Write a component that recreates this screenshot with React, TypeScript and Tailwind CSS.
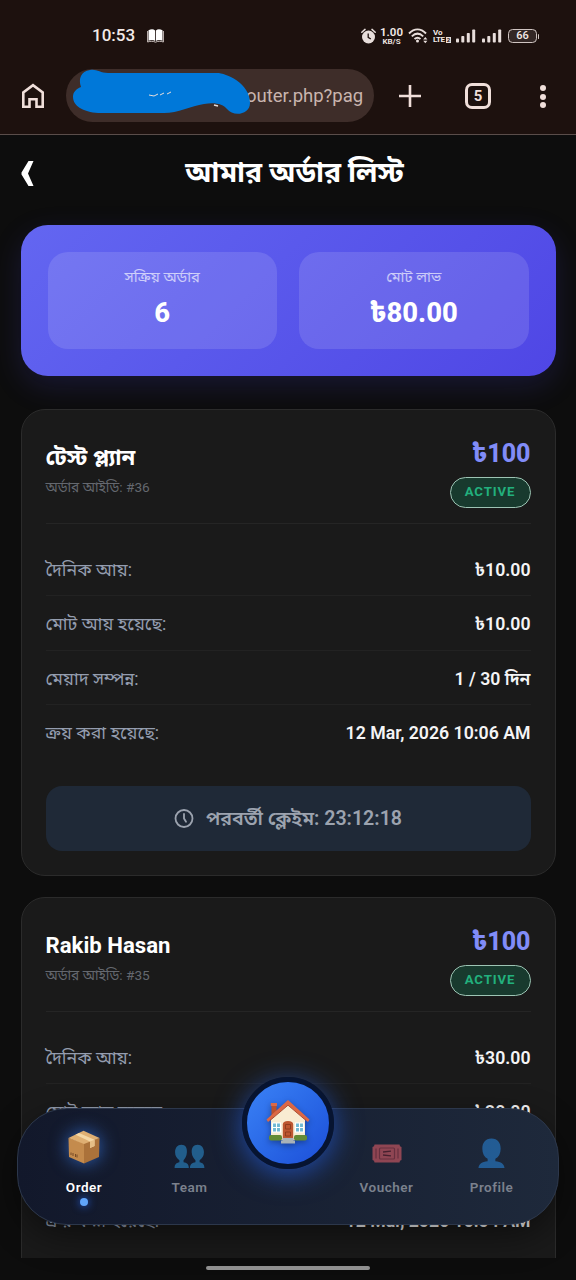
import React from "react";

interface Order {
  id: number;
  name: string;
  price: string;
  daily: string;
  total: string;
  progress: string;
  boughtAt: string;
  nextClaim?: string;
}

const orders: Order[] = [
  {
    id: 36,
    name: "টেস্ট প্ল্যান",
    price: "৳100",
    daily: "৳10.00",
    total: "৳10.00",
    progress: "1 / 30 দিন",
    boughtAt: "12 Mar, 2026 10:06 AM",
    nextClaim: "23:12:18",
  },
  {
    id: 35,
    name: "Rakib Hasan",
    price: "৳100",
    daily: "৳30.00",
    total: "৳30.00",
    progress: "1 / 30 দিন",
    boughtAt: "12 Mar, 2026 10:04 AM",
  },
];

const Signal: React.FC = () => (
  <svg width="20" height="14" viewBox="0 0 20 14" fill="#e8dedb">
    <rect x="0" y="9.5" width="3" height="4" rx="0.8" />
    <rect x="5.3" y="7" width="3" height="6.5" rx="0.8" />
    <rect x="10.8" y="4" width="3" height="9.5" rx="0.8" />
    <rect x="16.2" y="0.5" width="3" height="13" rx="0.8" />
  </svg>
);

const StatusBar: React.FC = () => (
  <div className="flex h-[69px] items-center pt-[3px] text-[#f3eae7]">
    <span className="ml-[92px] w-[43px] text-[17px] font-medium whitespace-nowrap">10:53</span>
    <svg className="ml-[12px]" width="17" height="14" viewBox="0 0 17 14">
      <path d="M1.5 1.2C4 0 6.5 0 8.1 1.4V12C6.2 10.8 3.8 10.8 1.5 11.8ZM15.5 1.2C13 0 10.5 0 8.9 1.4V12C10.8 10.8 13.2 10.8 15.5 11.8Z" fill="#fff" />
      <path d="M.6 2V13C3.6 12 6 12 8.5 13.2C11 12 13.4 12 16.4 13V2" fill="none" stroke="#c9bfbc" strokeWidth="1" />
    </svg>
    <div className="ml-auto flex items-center pr-[37px]">
      <svg width="15" height="16" viewBox="0 0 15 16">
        <circle cx="7.5" cy="9" r="6.5" fill="#e8dedb" />
        <path d="M7.2 5.5V9.4L9.8 11" fill="none" stroke="#1e110f" strokeWidth="1.3" />
        <path d="M.8 4.3L4 1.4M14.2 4.3L11 1.4" stroke="#e8dedb" strokeWidth="1.5" strokeLinecap="round" />
      </svg>
      <div className="ml-[3px] flex w-[25px] flex-col items-center font-semibold">
        <span className="text-[11.5px] leading-[11px]">1.00</span>
        <span className="text-[8px] leading-[8px]">KB/S</span>
      </div>
      <svg className="ml-[4px]" width="21" height="16" viewBox="0 0 21 16" fill="none" stroke="#e8dedb">
        <path d="M1 5.5C6.2 0 12.8 0 18 5.5M3.8 8.4C7.5 4.8 11.5 4.8 15.2 8.4M6.5 11C8.5 9.2 10.5 9.2 12.5 11" strokeWidth="1.9" />
        <circle cx="9.5" cy="13" r="1.5" fill="#e8dedb" stroke="none" />
        <path d="M15.2 11.5L17.3 9L19.4 11.5ZM15.2 12.7L17.3 15.2L19.4 12.7Z" fill="#e8dedb" stroke="none" />
      </svg>
      <div className="ml-[4px] flex w-[18px] flex-col font-bold">
        <span className="text-[8px] leading-[7px]">Vo</span>
        <span className="flex items-center text-[8px] leading-[7px] tracking-tighter">
          LTE<i className="ml-px bg-[#e8dedb] px-px text-[6px] leading-[6px] text-[#1e110f] not-italic">2</i>
        </span>
      </div>
      <span className="ml-[5px]"><Signal /></span>
      <span className="ml-[6px]"><Signal /></span>
      <div className="ml-[6px] flex h-[14px] w-[29px] items-center justify-center rounded-[4.5px] border border-[#cfc4c1] bg-[#332725] text-[11px] font-medium">
        66
      </div>
      <span className="ml-px h-[5px] w-px rounded bg-[#cfc4c1]" />
    </div>
  </div>
);

const BrowserBar: React.FC = () => (
  <div className="flex h-[66px] items-start border-b border-[#5a4d4a] text-[#f0dfda]">
    <svg className="mt-[13px] ml-[20px]" width="26" height="28" viewBox="0 0 26 28" fill="none" stroke="#f0dfda" strokeWidth="2.6">
      <path d="M3.3 24.7V10.5L13 3.2L22.7 10.5V24.7H16.5V17.3H9.5V24.7Z" />
    </svg>
    <div className="relative ml-[20px] flex h-[53px] w-[308px] items-center justify-end overflow-hidden rounded-full bg-[#3e2d29] pt-[2px] pr-[11px]">
      <span className="w-[117px] overflow-hidden text-[18.5px] whitespace-nowrap text-[#c9b5af]">outer.php?pag</span>
      {/* marker scribble over the address */}
      <svg className="absolute top-0 left-0" width="190" height="53" viewBox="0 0 190 53">
        <path d="M24 1C31 0 34 4 42 4H151C160 4 184 14 184 34C184 46 167 48 161 40C157 35 149 33 138 35C125 37 112 44 98 44H35C20 44 7 38 7 28C7 23 10 20 15 18C12 10 15 2 24 1Z" fill="#0078d9" />
        <path d="M83 26L88 27L92 25M94 26L98 24M101 25L105 23" stroke="#e8dedb" strokeWidth="1" fill="none" />
        <path d="M148 36L152 37" stroke="#e8dedb" strokeWidth="1.5" />
      </svg>
    </div>
    <svg className="mt-[15px] ml-[24px]" width="24" height="24" viewBox="0 0 24 24" stroke="#f0dfda" strokeWidth="2.6">
      <path d="M12 1V23M1 12H23" />
    </svg>
    <div className="mt-[14px] ml-[43px] flex size-[26px] items-center justify-center rounded-[7px] border-3 border-[#f0dfda] text-[15px] font-bold">
      5
    </div>
    <div className="mt-[16px] ml-[49px] flex flex-col gap-[2.5px]">
      <span className="size-[6px] rounded-full bg-[#f0dfda]" />
      <span className="size-[6px] rounded-full bg-[#f0dfda]" />
      <span className="size-[6px] rounded-full bg-[#f0dfda]" />
    </div>
  </div>
);

const Stat: React.FC<{ label: string; value: string }> = ({ label, value }) => (
  <div className="flex flex-1 flex-col items-center rounded-[20px] bg-white/12 pt-[14px]">
    <span className="flex h-[22px] items-center text-[14.8px] whitespace-nowrap text-white/65">{label}</span>
    <span className="mt-[10px] flex h-[32px] items-center text-[27.4px] font-extrabold text-white">{value}</span>
  </div>
);

const Row: React.FC<{ label: string; value: string; last?: boolean }> = ({ label, value, last }) => (
  <div className={`flex h-[54.4px] items-center justify-between border-b pt-[3px] text-[17.8px] whitespace-nowrap ${last ? "border-transparent" : "border-[#222]"}`}>
    <span className="text-[#949daf]">{label}</span>
    <span className="text-[17.7px] font-semibold text-[#f4f4f5]">{value}</span>
  </div>
);

const OrderCard: React.FC<{ order: Order }> = ({ order }) => (
  <div className="h-[467px] shrink-0 rounded-[24px] border border-[#2b2b2b] bg-[#1a1a1a] px-[24px]">
    <div className="flex h-[114px] justify-between border-b border-[#252525]">
      <div className="flex flex-col pt-[33px]">
        <h2 className="flex h-[30px] items-center text-[22.2px] font-bold whitespace-nowrap text-white">{order.name}</h2>
        <span className="flex h-[28px] items-center text-[13.7px] whitespace-nowrap text-[#64686f]">অর্ডার আইডি: #{order.id}</span>
      </div>
      <div className="flex flex-col items-end pt-[29px]">
        <span className="flex h-[30px] items-center text-[25px] font-extrabold text-[#818cf8]">{order.price}</span>
        <span className="mt-[8px] flex h-[31px] w-[81px] items-center justify-center rounded-full border border-[#9dc4b4] bg-[#183a2e] pb-[2px] text-[13.2px] font-bold tracking-[0.9px] text-[#22b07d]">
          ACTIVE
        </span>
      </div>
    </div>
    <div className="pt-[18px]">
      <Row label="দৈনিক আয়:" value={order.daily} />
      <Row label="মোট আয় হয়েছে:" value={order.total} />
      <Row label="মেয়াদ সম্পন্ন:" value={order.progress} />
      <Row label="ক্রয় করা হয়েছে:" value={order.boughtAt} last />
    </div>
    {order.nextClaim && (
      <button className="mt-[26px] flex h-[65px] w-full items-center justify-center gap-[12px] rounded-[16px] bg-[#1f2937] pt-px text-[19.6px] font-semibold whitespace-nowrap text-[#9ca3af]">
        <svg width="20" height="20" viewBox="0 0 20 20" fill="none" stroke="#9ca3af" strokeWidth="1.8" strokeLinecap="round">
          <circle cx="10" cy="9.5" r="8.5" />
          <path d="M10 5V9.5L12 12.8" />
        </svg>
        <span>পরবর্তী ক্লেইম: {order.nextClaim}</span>
      </button>
    )}
  </div>
);

const BoxIcon: React.FC = () => (
  <svg className="drop-shadow-[0_0_9px_rgba(59,130,246,0.7)]" width="34" height="34" viewBox="0 0 34 34">
    <path d="M1.5 8L17 13V33.5L2 27Z" fill="#c48b4d" />
    <path d="M17 13L32.5 8L32 27L17 33.5Z" fill="#ab723a" />
    <path d="M1.5 8L16.5 .8L32.5 8L17 14Z" fill="#dfaf72" />
    <path d="M8.5 4.7L12 3L27.5 9.7V16L23 18V11.6Z" fill="#f4d7a5" />
    <path d="M23 11.6L27.5 9.7V16L23 18Z" fill="#e5be85" />
    <path d="M4 22.5V25M6 23V26M8.5 24V27M10 24.5V27.5" stroke="#704421" strokeWidth="0.9" />
  </svg>
);

const TeamIcon: React.FC = () => (
  <svg width="31" height="25" viewBox="0 0 32 26" fill="#2c94d8">
    <path d="M7.5 .8C12 .8 13.6 4 13.3 8.5C13 12.5 11.5 15 9.8 17V19C13 19.7 15.3 20.5 15.3 25H.5C.5 21 2.3 19.7 5.5 19V17C3 15 1 12.5 1 8.5C1 4 3.5 .8 7.5 .8Z" />
    <path d="M24.5 .8C28.5 .8 31 4 31 8.5C31 12.5 29 15 26.5 17V19C29.7 19.7 31.5 21 31.5 25H16.5C16.5 20.5 19 19.7 22.2 19V17C20.5 15 18.5 12.5 18.3 8.5C18.1 4 20 .8 24.5 .8Z" />
  </svg>
);

const HouseIcon: React.FC = () => (
  <svg className="drop-shadow-[0_2px_3px_rgba(0,0,0,0.35)]" width="46" height="46" viewBox="0 0 46 46">
    <path d="M6.5 5H11.5V14L6.5 19Z" fill="#b9502f" />
    <path d="M5.8 4H12V7H5.8Z" fill="#d9694a" />
    <path d="M6 20L23 4L40 20V41H6Z" fill="#f9ecd2" />
    <path d="M1.5 20.5L23 1L44.5 20.5L43 23L23 6L3 23Z" fill="#dc6744" />
    <path d="M5 21.5L23 6.2L41 21.5" fill="none" stroke="#a34125" strokeWidth="0.9" />
    <path d="M17.8 41V25.5Q17.8 22 23 22Q28.2 22 28.2 25.5V41Z" fill="#bd5630" />
    <path d="M20.5 25.5H25.5V30H20.5ZM20.5 33H25.5V37H20.5Z" fill="none" stroke="#8c3a1c" strokeWidth="0.9" />
    <g fill="#70b8d2" stroke="#fff" strokeWidth="1.1">
      <path d="M7.5 24H15.5V33H7.5ZM11.5 24V33M7.5 28.5H15.5" />
      <path d="M30.5 24H38.5V33H30.5ZM34.5 24V33M30.5 28.5H38.5" />
    </g>
    <rect x="4" y="36" width="13" height="5.5" rx="2" fill="#638b35" />
    <rect x="29" y="36" width="13" height="5.5" rx="2" fill="#638b35" />
    <path d="M17.5 39H28.5V41.5H30V44.5H16V41.5H17.5Z" fill="#a9b2b8" />
  </svg>
);

const VoucherIcon: React.FC = () => (
  <svg className="mb-[6px]" width="30" height="19" viewBox="0 0 30 19">
    <path d="M2.5 .5H27.5A2.5 2.5 0 0 0 29.5 3V16A2.5 2.5 0 0 0 27.5 18.5H2.5A2.5 2.5 0 0 0 .5 16V3A2.5 2.5 0 0 0 2.5 .5Z" fill="#f0626c" />
    <rect x="7.5" y="4" width="15" height="11" rx="1" fill="none" stroke="#a53a47" strokeWidth="1.2" />
    <path d="M11 8L19 7.2M11 11L19 11.8" stroke="#6b1f2b" strokeWidth="1.3" />
    <path d="M4 4.5V14.5M26 4.5V14.5" stroke="#a53a47" strokeWidth="1.2" />
  </svg>
);

const ProfileIcon: React.FC = () => (
  <svg width="27" height="31" viewBox="0 0 28 31" fill="#2888df">
    <path d="M14 0C20.5 0 23.5 4.5 23.5 10.5C23.5 15.5 21.5 19 18 21V23.5C24 24.3 27 26 27.5 30.5H.5C1 26 4 24.3 10 23.5V21C6.5 19 4.5 15.5 4.5 10.5C4.5 4.5 7.5 0 14 0Z" />
  </svg>
);

const NavItem: React.FC<{ label: string; active?: boolean; children: React.ReactNode }> = ({ label, active, children }) => (
  <div className="flex w-[99px] flex-col items-center pt-[20px]">
    <div className={`flex h-[40px] items-end ${active ? "pb-[5px]" : "opacity-55"}`}>{children}</div>
    <span className={`mt-[8px] text-[13.5px] leading-[20px] font-semibold tracking-[0.5px] ${active ? "text-white" : "text-[#7b818d]"}`}>{label}</span>
    {active && <span className="mt-[1px] size-[8px] rounded-full bg-[#60a5fa] shadow-[0_0_8px_#2563eb]" />}
  </div>
);

const BottomNav: React.FC = () => (
  <nav className="absolute top-[1108px] left-[17px] flex h-[117px] w-[542px] rounded-[50px] border border-[#2c374b] bg-linear-to-r from-[#12182b] to-[#1e293b] px-[17px] shadow-[0_12px_34px_rgba(0,0,0,0.45)]">
    <NavItem label="Order" active><BoxIcon /></NavItem>
    <div className="ml-[7px]"><NavItem label="Team"><TeamIcon /></NavItem></div>
    <div className="-mt-[32px] ml-[3px] flex size-[92px] shrink-0 items-center justify-center rounded-full border-[5px] border-[#071431] bg-linear-to-br from-[#3b82f6] to-[#1d4ed8] pb-[3px] shadow-[0_5px_28px_rgba(37,99,235,0.65)]">
      <HouseIcon />
    </div>
    <div className="ml-[3px]"><NavItem label="Voucher"><VoucherIcon /></NavItem></div>
    <div className="ml-[6px]"><NavItem label="Profile"><ProfileIcon /></NavItem></div>
  </nav>
);

const App: React.FC = () => {
  return (
    <div className="relative flex h-[1280px] w-[576px] flex-col overflow-hidden bg-[#0d0d0d] font-[Roboto,'Noto_Sans_Bengali','Noto_Sans',sans-serif]">
      <header className="bg-[#1d110e]">
        <StatusBar />
        <BrowserBar />
      </header>
      <main className="flex h-[1123px] flex-col overflow-hidden px-[20.5px]">
        <div className="flex h-[90px] shrink-0 items-start">
          <svg className="mt-[26px]" width="14" height="26" viewBox="0 0 14 26" fill="#fff">
            <path d="M7.5 0H12.5L7 12.5L12.5 25H7.5L.5 13.5V11.5Z" />
          </svg>
          <h1 className="flex h-[76px] flex-1 items-center justify-center pr-[1px] text-[28.4px] font-bold whitespace-nowrap text-white">আমার অর্ডার লিস্ট</h1>
        </div>
        <section className="flex h-[151px] shrink-0 gap-[22px] rounded-[27px] bg-linear-135 from-[#6366f1] to-[#4f46e5] p-[27px] shadow-[0_10px_30px_rgba(79,70,229,0.18)]">
          <Stat label="সক্রিয় অর্ডার" value="6" />
          <Stat label="মোট লাভ" value="৳80.00" />
        </section>
        <div className="mt-[33px] flex flex-col gap-[21px]">
          {orders.map((order) => (
            <OrderCard key={order.id} order={order} />
          ))}
        </div>
      </main>
      <BottomNav />
      <div className="mt-[8px] h-[4px] w-[164px] self-center rounded-full bg-[#929292]" />
    </div>
  );
};

export default App;
